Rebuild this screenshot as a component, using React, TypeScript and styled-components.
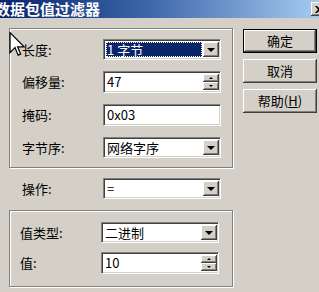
import styled, { createGlobalStyle, css } from "styled-components";

const GlobalStyle = createGlobalStyle`
  html, body {
    margin: 0;
    padding: 0;
    background: #d4d0c8;
    overflow: hidden;
  }
  * {
    box-sizing: border-box;
  }
`;

const Window = styled.div`
  position: relative;
  width: 319px;
  height: 292px;
  background: #d4d0c8;
  overflow: hidden;
  font-family: "Noto Sans CJK SC", "Liberation Sans", sans-serif;
  font-size: 13px;
  color: #000;
`;

const TitleBar = styled.div`
  display: flex;
  align-items: center;
  justify-content: space-between;
  height: 18px;
  background: linear-gradient(to right, #0a246a 0%, #3a64a8 45%, #a6caf0 100%);
`;

const Title = styled.div`
  margin-left: -5px;
  color: #fff;
  font-weight: bold;
  font-size: 15px;
  line-height: 18px;
  white-space: nowrap;
`;

const CloseBtn = styled.div`
  width: 16px;
  height: 14px;
  margin-right: -8px;
  display: flex;
  align-items: center;
  justify-content: center;
  background: #d4d0c8;
  box-shadow: inset -1px -1px #404040, inset 1px 1px #fff,
    inset -2px -2px #808080;
`;

const Body = styled.div`
  display: flex;
  padding: 10px 0 0 9px;
`;

const Fields = styled.div`
  display: flex;
  flex-direction: column;
  width: 224px;
`;

const Group = styled.div<{ $height: number; $gap: number; $top: number }>`
  display: flex;
  flex-direction: column;
  gap: ${(p) => p.$gap}px;
  height: ${(p) => p.$height}px;
  padding-top: ${(p) => p.$top}px;
  border: 1px solid #808080;
  box-shadow: 1px 1px 0 #fff, inset 1px 1px 0 #fff;
`;

const Row = styled.div<{ $indent?: number }>`
  display: flex;
  align-items: center;
  padding-left: ${(p) => p.$indent ?? 12}px;
`;

const OpRow = styled(Row)`
  margin: 10px 0 11px;
`;

const Label = styled.div`
  width: 81px;
  white-space: nowrap;
  line-height: 16px;
`;

const sunken = css`
  border-style: solid;
  border-width: 1px;
  border-color: #808080 #fff #fff #808080;
  box-shadow: inset 1px 1px #404040, inset -1px -1px #d4d0c8;
  background: #fff;
`;

const raised = css`
  background: #d4d0c8;
  box-shadow: inset -1px -1px #404040, inset 1px 1px #fff,
    inset -2px -2px #808080;
`;

const Box = styled.div<{ $h: number }>`
  ${sunken};
  width: 118px;
  height: ${(p) => p.$h}px;
  display: flex;
  align-items: stretch;
  padding: 2px 1px 2px 2px;
`;

const Value = styled.div<{ $selected?: boolean }>`
  flex: 1;
  display: flex;
  align-items: center;
  padding-left: 1px;
  line-height: 14px;
  white-space: nowrap;
  ${(p) =>
    p.$selected &&
    css`
      background: #0a246a;
      color: #fff;
      outline: 1px dotted #fff;
      outline-offset: -1px;
      margin-right: 1px;
    `}
`;

const DropBtn = styled.div`
  ${raised};
  width: 16px;
  display: flex;
  align-items: center;
  justify-content: center;
`;

const DownTri = styled.div<{ $size: number }>`
  width: 0;
  height: 0;
  border-left: ${(p) => p.$size}px solid transparent;
  border-right: ${(p) => p.$size}px solid transparent;
  border-top: ${(p) => p.$size}px solid #000;
`;

const UpTri = styled.div<{ $size: number }>`
  width: 0;
  height: 0;
  border-left: ${(p) => p.$size}px solid transparent;
  border-right: ${(p) => p.$size}px solid transparent;
  border-bottom: ${(p) => p.$size}px solid #000;
`;

const Spin = styled.div`
  width: 16px;
  display: flex;
  flex-direction: column;
`;

const SpinHalf = styled.div`
  ${raised};
  flex: 1;
  display: flex;
  align-items: center;
  justify-content: center;
`;

const Buttons = styled.div`
  display: flex;
  flex-direction: column;
  gap: 6px;
  margin: 1px 0 0 10px;
`;

const Button = styled.div<{ $default?: boolean }>`
  ${raised};
  width: 74px;
  height: 24px;
  display: flex;
  align-items: center;
  justify-content: center;
  line-height: 16px;
  ${(p) =>
    p.$default &&
    css`
      border: 1px solid #000;
    `}
`;

const Cursor = styled.svg`
  position: absolute;
  left: 9px;
  top: 32px;
`;

function Combo({ value, selected }: { value: string; selected?: boolean }) {
  return (
    <Box $h={21}>
      <Value $selected={selected}>{value}</Value>
      <DropBtn>
        <DownTri $size={4} />
      </DropBtn>
    </Box>
  );
}

function SpinEdit({ value }: { value: string }) {
  return (
    <Box $h={22}>
      <Value>{value}</Value>
      <Spin>
        <SpinHalf>
          <UpTri $size={2} />
        </SpinHalf>
        <SpinHalf>
          <DownTri $size={2} />
        </SpinHalf>
      </Spin>
    </Box>
  );
}

function Edit({ value }: { value: string }) {
  return (
    <Box $h={22}>
      <Value>{value}</Value>
    </Box>
  );
}

export default function App() {
  return (
    <Window>
      <GlobalStyle />
      <TitleBar>
        <Title>数据包值过滤器</Title>
        <CloseBtn>
          <svg width="8" height="7" viewBox="0 0 8 7">
            <path d="M0 0h2l2 2 2-2h2L5 3.5 8 7H6L4 5 2 7H0l3-3.5z" fill="#000" />
          </svg>
        </CloseBtn>
      </TitleBar>
      <Body>
        <Fields>
          <Group $height={140} $gap={11} $top={10}>
            <Row>
              <Label>长度:</Label>
              <Combo value="1 字节" selected />
            </Row>
            <Row>
              <Label>偏移量:</Label>
              <SpinEdit value="47" />
            </Row>
            <Row>
              <Label>掩码:</Label>
              <Edit value="0x03" />
            </Row>
            <Row>
              <Label>字节序:</Label>
              <Combo value="网络字序" />
            </Row>
          </Group>
          <OpRow $indent={13}>
            <Label>操作:</Label>
            <Combo value="=" />
          </OpRow>
          <Group $height={77} $gap={9} $top={11}>
            <Row $indent={10}>
              <Label>值类型:</Label>
              <Combo value="二进制" />
            </Row>
            <Row $indent={10}>
              <Label>值:</Label>
              <SpinEdit value="10" />
            </Row>
          </Group>
        </Fields>
        <Buttons>
          <Button $default>确定</Button>
          <Button>取消</Button>
          <Button>
            帮助(<u>H</u>)
          </Button>
        </Buttons>
      </Body>
      <Cursor width="17" height="25" viewBox="0 0 13 20">
        <path
          d="M0.5 0.5 L0.5 16.5 L4.5 12.5 L7 18.5 L9 17.7 L6.6 11.8 L11.8 11.8 Z"
          fill="#fff"
          stroke="#000"
          strokeWidth="1"
          strokeLinejoin="miter"
        />
      </Cursor>
    </Window>
  );
}
